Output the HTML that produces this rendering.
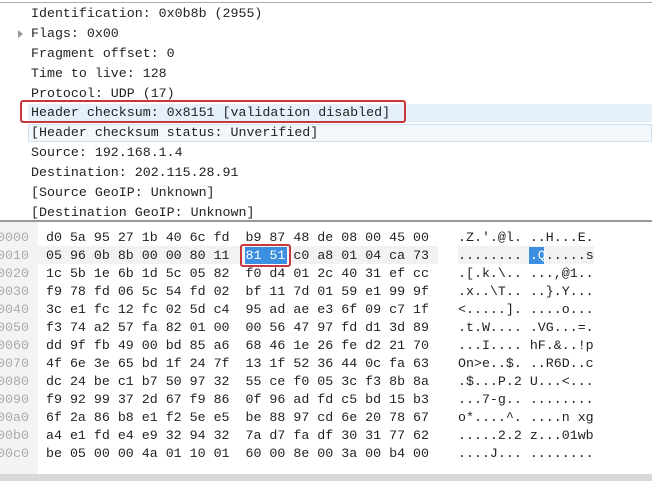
<!DOCTYPE html>
<html><head><style>
body{margin:0;width:652px;height:481px;overflow:hidden;background:#fff;font-family:"Liberation Mono",monospace;font-size:13.3px;color:#222;position:relative}
.t{position:absolute;left:31px;white-space:pre;line-height:20px}
.h{position:absolute;white-space:pre;line-height:18px}
.o{color:#aaa}
</style></head><body>
<div style="position:absolute;left:0;top:2px;width:652px;height:1px;background:#aaa"></div>
<div style="position:absolute;left:28px;top:104px;width:624px;height:18px;background:#e6f0fb"></div>
<div style="position:absolute;left:28px;top:124px;width:624px;height:18px;background:#f3f8fd;border:1px solid #cfe0f4;box-sizing:border-box"></div>
<div class="t" style="top:4px">Identification: 0x0b8b (2955)</div>
<div style="position:absolute;left:18px;top:30px;width:0;height:0;border-left:5px solid #999;border-top:4px solid transparent;border-bottom:4px solid transparent"></div>
<div class="t" style="top:24px">Flags: 0x00</div>
<div class="t" style="top:44px">Fragment offset: 0</div>
<div class="t" style="top:64px">Time to live: 128</div>
<div class="t" style="top:84px">Protocol: UDP (17)</div>
<div class="t" style="top:103px">Header checksum: 0x8151 [validation disabled]</div>
<div class="t" style="top:123px">[Header checksum status: Unverified]</div>
<div class="t" style="top:143px">Source: 192.168.1.4</div>
<div class="t" style="top:163px">Destination: 202.115.28.91</div>
<div class="t" style="top:183px">[Source GeoIP: Unknown]</div>
<div class="t" style="top:203px">[Destination GeoIP: Unknown]</div>
<div style="position:absolute;left:20px;top:100px;width:386px;height:23px;border:2px solid #c8383a;border-radius:3px;box-sizing:border-box"></div>
<div style="position:absolute;left:0;top:220px;width:652px;height:2px;background:#999"></div>
<div style="position:absolute;left:0;top:222px;width:38px;height:253px;background:#f3f3f3"></div>
<div style="position:absolute;left:38px;top:246px;width:400px;height:18px;background:#f2f2f2"></div>
<div style="position:absolute;left:458px;top:246px;width:136px;height:18px;background:#f2f2f2"></div>
<div style="position:absolute;left:245px;top:247px;width:42px;height:17px;background:#3b8ee0"></div>
<div style="position:absolute;left:529px;top:247px;width:15px;height:17px;background:#3b8ee0"></div>
<div class="h o" style="left:-3px;top:229px">0000
0010
0020
0030
0040
0050
0060
0070
0080
0090
00a0
00b0
00c0</div>
<div class="h" style="left:46px;top:229px">d0 5a 95 27 1b 40 6c fd  b9 87 48 de 08 00 45 00
05 96 0b 8b 00 00 80 11  <span style="color:#fff">81 51</span> c0 a8 01 04 ca 73
1c 5b 1e 6b 1d 5c 05 82  f0 d4 01 2c 40 31 ef cc
f9 78 fd 06 5c 54 fd 02  bf 11 7d 01 59 e1 99 9f
3c e1 fc 12 fc 02 5d c4  95 ad ae e3 6f 09 c7 1f
f3 74 a2 57 fa 82 01 00  00 56 47 97 fd d1 3d 89
dd 9f fb 49 00 bd 85 a6  68 46 1e 26 fe d2 21 70
4f 6e 3e 65 bd 1f 24 7f  13 1f 52 36 44 0c fa 63
dc 24 be c1 b7 50 97 32  55 ce f0 05 3c f3 8b 8a
f9 92 99 37 2d 67 f9 86  0f 96 ad fd c5 bd 15 b3
6f 2a 86 b8 e1 f2 5e e5  be 88 97 cd 6e 20 78 67
a4 e1 fd e4 e9 32 94 32  7a d7 fa df 30 31 77 62
be 05 00 00 4a 01 10 01  60 00 8e 00 3a 00 b4 00</div>
<div class="h" style="left:458px;top:229px">.Z.'.@l. ..H...E.
........ <span style="color:#fff">.Q</span>.....s
.[.k.\.. ...,@1..
.x..\T.. ..}.Y...
&lt;.....]. ....o...
.t.W.... .VG...=.
...I.... hF.&amp;..!p
On&gt;e..$. ..R6D..c
.$...P.2 U...&lt;...
...7-g.. ........
o*....^. ....n xg
.....2.2 z...01wb
....J... ........</div>
<div style="position:absolute;left:240px;top:244px;width:51px;height:23px;border:2px solid #c8383a;border-radius:3px;box-sizing:border-box"></div>
<div style="position:absolute;left:0;top:474px;width:652px;height:7px;background:#d8d8d8"></div>
</body></html>
